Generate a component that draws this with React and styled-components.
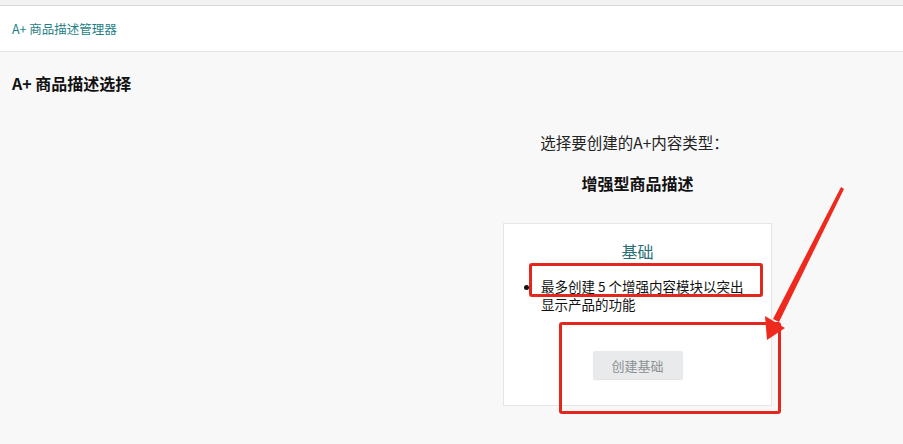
import React from 'react';
import styled, { createGlobalStyle } from 'styled-components';

const GlobalStyle = createGlobalStyle`
  html, body {
    margin: 0;
    padding: 0;
    background: #f8f8f8;
  }
  body {
    font-family: "Noto Sans CJK SC", "Noto Sans", "Liberation Sans", sans-serif;
    color: #111;
  }
`;

const Page = styled.div`
  position: relative;
  width: 903px;
  height: 444px;
  overflow: hidden;
  background: #f8f8f8;
`;

const TopStrip = styled.div`
  height: 5px;
  background: #f2f2f2;
`;

const Header = styled.header`
  height: 45px;
  display: flex;
  align-items: center;
  padding: 0 12px;
  background: #fff;
  border-top: 1px solid #d9d9d9;
  border-bottom: 1px solid #e2e2e2;
`;

const HeaderLink = styled.a`
  font-size: 12.5px;
  color: #1f7f86;
  text-decoration: none;
  cursor: pointer;
`;

const Main = styled.main`
  padding: 20px 12px 0;
`;

const PageTitle = styled.h1`
  margin: 0;
  font-size: 16px;
  line-height: 22px;
  font-weight: 700;
  color: #111;
`;

const Layout = styled.div`
  display: grid;
  grid-template-columns: 491px 269px;
  margin-top: 38px;
`;

const Column = styled.section`
  grid-column: 2;
  display: flex;
  flex-direction: column;
  align-items: center;
`;

const Prompt = styled.p`
  margin: 0 0 0 -6px;
  font-size: 15.5px;
  line-height: 20px;
  color: #222;
  white-space: nowrap;
`;

const TypeTitle = styled.h2`
  margin: 20px 0 0;
  font-size: 16px;
  line-height: 22px;
  font-weight: 700;
  color: #111;
`;

const Card = styled.div`
  box-sizing: border-box;
  width: 100%;
  margin-top: 29px;
  padding: 16px 20px 26px;
  background: #fff;
  border: 1px solid #e6e6e6;
  display: flex;
  flex-direction: column;
  align-items: center;
`;

const CardTitle = styled.h3`
  margin: 0;
  font-size: 16px;
  line-height: 22px;
  font-weight: 400;
  color: #2a6f73;
`;

const Features = styled.ul`
  align-self: stretch;
  margin: 15px 0 0;
  padding-left: 17px;
  font-size: 13.5px;
  line-height: 18px;
  color: #111;
`;

const CreateButton = styled.button`
  margin-top: 38px;
  width: 90px;
  height: 28px;
  border: none;
  border-radius: 2px;
  background: #e8eaeb;
  box-shadow: 0 1px 1px rgba(0, 0, 0, 0.12);
  font-family: inherit;
  font-size: 13px;
  color: #8c9193;
  cursor: default;
`;

const Highlight = styled.div`
  position: absolute;
  box-sizing: border-box;
  border: 3px solid #e3261e;
  border-radius: 3px;
  pointer-events: none;
`;

const ArrowLayer = styled.svg`
  position: absolute;
  left: 0;
  top: 0;
  pointer-events: none;
`;

const App = () => (
  <>
    <GlobalStyle />
    <Page>
      <TopStrip />
      <Header>
        <HeaderLink>A+ 商品描述管理器</HeaderLink>
      </Header>
      <Main>
        <PageTitle>A+ 商品描述选择</PageTitle>
        <Layout>
          <Column>
            <Prompt>选择要创建的A+内容类型：</Prompt>
            <TypeTitle>增强型商品描述</TypeTitle>
            <Card>
              <CardTitle>基础</CardTitle>
              <Features>
                <li>最多创建 5 个增强内容模块以突出显示产品的功能</li>
              </Features>
              <CreateButton>创建基础</CreateButton>
            </Card>
          </Column>
        </Layout>
      </Main>

      <Highlight style={{ left: 529, top: 263, width: 234, height: 34 }} />
      <Highlight style={{ left: 559, top: 322, width: 222, height: 92 }} />
      <ArrowLayer width="903" height="444" viewBox="0 0 903 444">
        <polygon points="841,187 844,189 779,322 773,319" fill="#ee2a1e" />
        <polygon points="765,316 785,328 767,340" fill="#ee2a1e" />
      </ArrowLayer>
    </Page>
  </>
);

export default App;
